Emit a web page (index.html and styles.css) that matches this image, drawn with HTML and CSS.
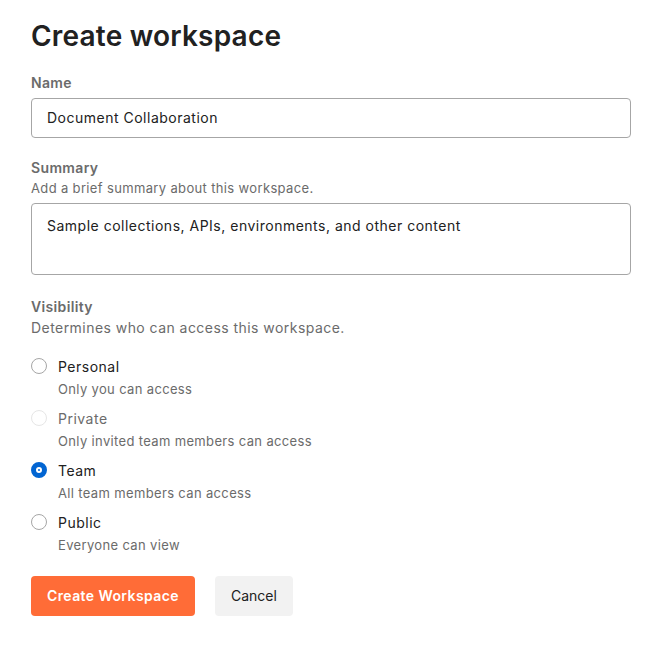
FILE: index.html
```html
<!DOCTYPE html>
<html lang="en">
<head>
<meta charset="utf-8">
<title>Create workspace</title>
<link rel="stylesheet" href="styles.css">
</head>
<body>
<main class="page">
  <h1 class="title">Create workspace</h1>

  <div class="field field-name">
    <label class="label" for="name">Name</label>
    <div class="input">Document Collaboration</div>
  </div>

  <div class="field field-summary">
    <label class="label">Summary</label>
    <div class="help">Add a brief summary about this workspace.</div>
    <div class="input textarea">Sample collections, APIs, environments, and other content</div>
  </div>

  <div class="field field-visibility">
    <div class="label">Visibility</div>
    <div class="help help-lg">Determines who can access this workspace.</div>
    <div class="options">
      <div class="option">
        <span class="radio"></span>
        <div class="option-text">
          <div class="option-title">Personal</div>
          <div class="option-sub">Only you can access</div>
        </div>
      </div>
      <div class="option disabled">
        <span class="radio"></span>
        <div class="option-text">
          <div class="option-title">Private</div>
          <div class="option-sub">Only invited team members can access</div>
        </div>
      </div>
      <div class="option">
        <span class="radio checked"></span>
        <div class="option-text">
          <div class="option-title">Team</div>
          <div class="option-sub">All team members can access</div>
        </div>
      </div>
      <div class="option">
        <span class="radio"></span>
        <div class="option-text">
          <div class="option-title">Public</div>
          <div class="option-sub">Everyone can view</div>
        </div>
      </div>
    </div>
  </div>

  <div class="actions">
    <button class="btn btn-primary">Create Workspace</button>
    <button class="btn btn-secondary">Cancel</button>
  </div>
</main>
</body>
</html>
```

FILE: styles.css
```css
* { box-sizing: border-box; }

html, body {
  margin: 0;
  padding: 0;
  background: #ffffff;
}

body {
  font-family: Inter, "Noto Sans", "Liberation Sans", sans-serif;
  color: #212121;
}

.page {
  width: 600px;
  margin-left: 31px;
  padding-top: 18px;
}

.title {
  margin: 0;
  font-size: 28px;
  line-height: 36px;
  font-weight: 600;
  color: #212121;
  letter-spacing: 0.2px;
}

.field {
  display: flex;
  flex-direction: column;
}

.field-name { margin-top: 19px; }
.field-summary { margin-top: 20px; }
.field-visibility { margin-top: 22px; }

.label {
  font-size: 14px;
  line-height: 20px;
  font-weight: 600;
  color: #6b6b6b;
  letter-spacing: 0.35px;
}

.help {
  font-size: 13px;
  line-height: 20px;
  color: #6b6b6b;
  letter-spacing: 0.35px;
}

.help-lg {
  font-size: 14px;
  line-height: 22px;
  letter-spacing: 0.45px;
}

.input {
  margin-top: 5px;
  height: 40px;
  border: 1px solid #a6a6a6;
  border-radius: 4px;
  padding: 9px 15px;
  font-size: 14px;
  line-height: 20px;
  color: #212121;
  letter-spacing: 0.5px;
}

.textarea {
  height: 72px;
  padding-top: 12px;
}

.options {
  display: flex;
  flex-direction: column;
  gap: 10px;
  margin-top: 18px;
}

.option {
  display: flex;
  align-items: flex-start;
  gap: 11px;
}

.radio {
  flex: none;
  width: 16px;
  height: 16px;
  margin-top: 1px;
  border: 1px solid #a6a6a6;
  border-radius: 50%;
  background: #fff;
  position: relative;
}

.radio.checked {
  border: 5px solid #0265d2;
  background: #fff;
}

.radio.checked::after {
  content: "";
  position: absolute;
  left: 50%;
  top: 50%;
  width: 2px;
  height: 2px;
  margin: -1px 0 0 -1px;
  border-radius: 50%;
  background: #0265d2;
}

.option.disabled .radio {
  border-color: #e6e6e6;
}

.option-title {
  font-size: 14px;
  line-height: 20px;
  color: #212121;
  letter-spacing: 0.5px;
}

.option.disabled .option-title {
  color: #6b6b6b;
}

.option-sub {
  margin-top: 2px;
  font-size: 13px;
  line-height: 20px;
  color: #6b6b6b;
  letter-spacing: 0.35px;
}

.actions {
  display: flex;
  gap: 20px;
  margin-top: 21px;
}

.btn {
  height: 40px;
  padding: 0 16px;
  border: none;
  border-radius: 4px;
  font-family: inherit;
  font-size: 14px;
  line-height: 20px;
  cursor: pointer;
}

.btn-primary {
  background: #ff6c37;
  color: #ffffff;
  font-weight: 600;
  letter-spacing: 0.4px;
}

.btn-secondary {
  background: #f2f2f2;
  color: #212121;
  font-weight: 400;
  letter-spacing: 0;
}
```
